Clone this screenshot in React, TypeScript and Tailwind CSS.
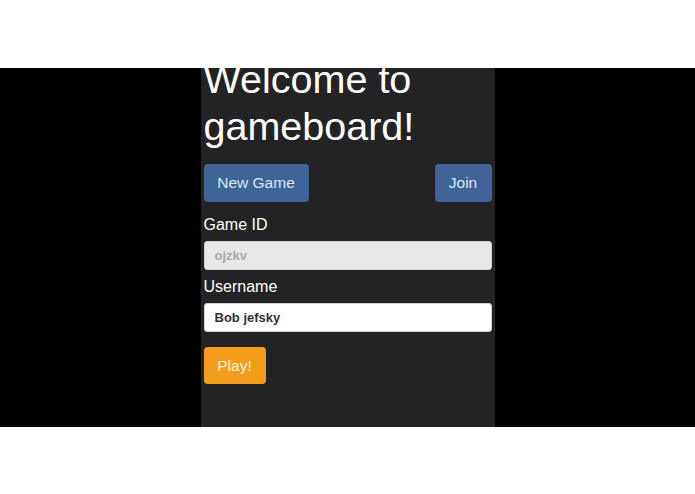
export default function App() {
  return (
    <div className="w-[695px] h-[494px] bg-white flex flex-col" style={{ fontFamily: '"Liberation Sans", Arial, sans-serif' }}>
      <div className="h-[68px] shrink-0" />
      <div className="h-[359px] bg-black flex justify-center">
        {/* phone viewport, scrolled so the heading runs under the top edge */}
        <div className="w-[294px] h-full bg-[#232325] overflow-hidden px-[3px]">
          <h1 className="mt-[-12px] text-[39.5px] leading-[47px] text-white font-normal">
            Welcome to
            <br />
            gameboard!
          </h1>

          <div className="flex justify-between mt-[14px]">
            <button className="h-[38px] w-[105px] rounded-[4px] bg-[#3f6596] text-[#dde6f1] text-[15.5px]">
              New Game
            </button>
            <button className="h-[38px] w-[57px] rounded-[4px] bg-[#3f6596] text-[#dde6f1] text-[15.5px]">
              Join
            </button>
          </div>

          <label className="block mt-[11px] text-white text-[16px] leading-[24px]">Game ID</label>
          <div className="mt-[4px] h-[29px] rounded-[3px] bg-[#e8e8e8] border border-[#cfcfcf] flex items-center px-[10px] text-[13px] font-bold text-[#a9a9a9]">
            ojzkv
          </div>

          <label className="block mt-[5px] text-white text-[16px] leading-[24px]">Username</label>
          <div className="mt-[4px] h-[29px] rounded-[3px] bg-white border border-[#cfcfcf] flex items-center px-[10px] text-[13px] font-bold text-[#333333]">
            Bob jefsky
          </div>

          <button className="mt-[15px] h-[37px] w-[62px] rounded-[4px] bg-[#f49d1d] text-[#fdf1de] text-[15.5px]">
            Play!
          </button>
        </div>
      </div>
    </div>
  )
}
